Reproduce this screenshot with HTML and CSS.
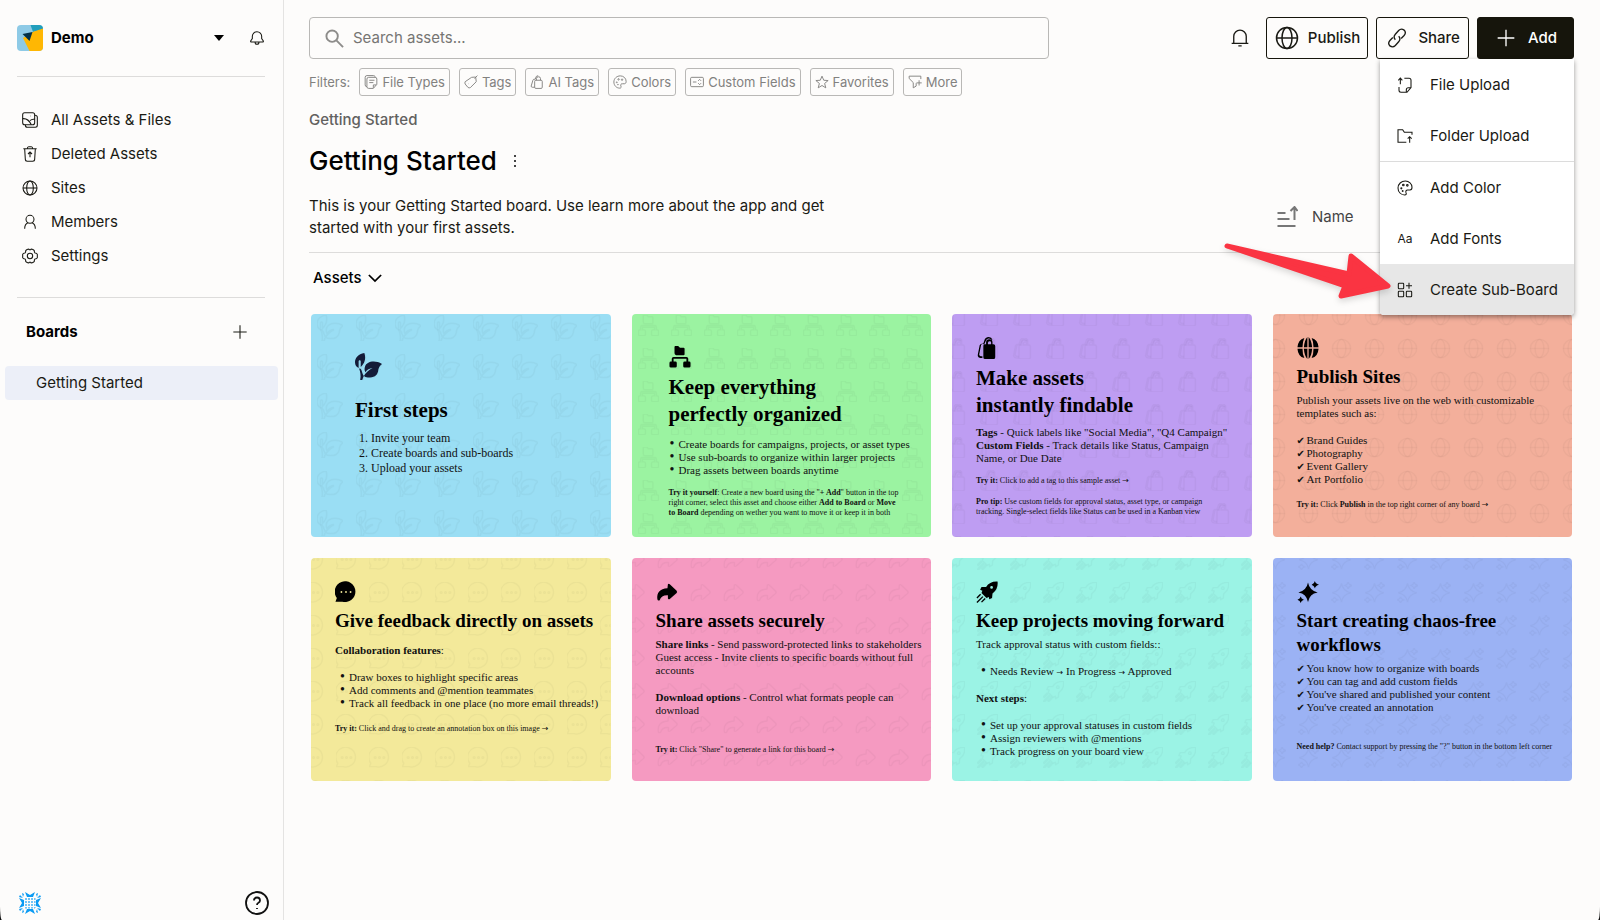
FILE: index.html
```html
<!DOCTYPE html>
<html lang="en">
<head>
    <meta charset="UTF-8">
    <meta name="viewport" content="width=device-width, initial-scale=1.0">
    <title>Getting Started</title>
    <link rel="stylesheet" href="styles.css">
</head>
<body>
    <!-- Shared icon shapes -->
    <svg class="sprite" aria-hidden="true">
        <symbol id="i-bell" viewBox="0 0 24 24"><path d="M2 18.500h20M4.500 18.500V10a7.500 7.500 0 0 1 15 0v8.500M10 21.500h4"/></symbol>
        <symbol id="i-globe" viewBox="0 0 24 24"><circle cx="12" cy="12" r="10.500"/><ellipse cx="12" cy="12" rx="5" ry="10.500"/><path d="M1.500 12h21"/></symbol>
        <symbol id="i-plus" viewBox="0 0 24 24"><path d="M12 2v20M2 12h20"/></symbol>
        <symbol id="i-palette" viewBox="0 0 24 24"><path d="M12.500 1.500C6.500 1.500 1.500 6 1.500 12s4.500 10.500 10 10.500c2.500 0 3-1.500 2-3.500-1-2.500.5-4.500 3-4h3c2 0 3-1.500 3-4 0-5.500-4.500-9.500-10-9.500z"/><circle cx="9.500" cy="7.500" r="1.200"/><circle cx="15.500" cy="8" r="1.200"/><circle cx="6.500" cy="12.500" r=".8"/><circle cx="8.500" cy="16.500" r=".6"/></symbol>
        <symbol id="i-leaf" viewBox="0 0 26 26"><path d="M9 0C3 1 0 5 0 9c0 3 1.500 4.500 3.500 5.500V8c0-1.500 2-1.500 2 0v5.500C9 10 11 6 9 0z"/><path d="M26 10.500c-7-4-15-2.500-16.500 3-.5 2-.3 3.500.5 5 1.500-2.500 4-3.500 7-4-3.500 2-6.500 4-9 8.500L7 26H5c1-4 0-8-1-11 2 0 2.500 2 3 4 1 3 1.500 3 3 4 8 2 12-1 12.500-7 .5-2.500 1.500-4 3.500-5.500z"/></symbol>
        <symbol id="i-tree" viewBox="0 0 24 24"><path d="M6 1q0-1 1-1h3l2 2h4q1 0 1 1v6q0 1-1 1H8q-2 0-2-2z"/><path d="M11 12h8q2 0 2 2v3h1q1.500 0 1.500 1.500V22q0 1.500-1.500 1.500h-5q-1.500 0-1.500-1.500v-3.500q0-1.500 1.500-1.500h2v-3H5v3h2q1.500 0 1.500 1.500V22q0 1.500-1.500 1.500H2Q.5 23.500.5 22v-3.500Q.5 17 2 17h1v-3q0-2 2-2h6z"/></symbol>
        <symbol id="i-bags" viewBox="0 0 24 24"><path d="M9 8h2V6a3.500 3.500 0 0 1 7 0v2h1q2 0 2 2v12q0 2-2 2H10q-2 0-2-2V10q0-2 1-2zM13 8h3.500V6q0-1.500-1.500-1.500T13 6z"/><path d="M8 7l1-3q1-4 5-4 3 0 4 3l-1.500 0q-1-1.500-3-1.500-2 0-3 3L9 8q-3-1-3.500 1L3.500 19q0 2 3.500 2v2q-6 0-5-4L4 9q.5-2 4-2z"/></symbol>
        <symbol id="i-globe-solid" viewBox="0 0 24 24"><path d="M8 1Q1 3 .5 11.300H6Q6 5 8 1zM11.300 0Q8 4 7.500 11.300h3.800zM12.700 0Q16 4 16.500 11.300h-3.800zM16 1q7 2 7.500 10.300H18Q18 5 16 1zM8 23Q1 21 .5 12.700H6Q6 19 8 23zM11.300 24Q8 20 7.500 12.700h3.800zM12.700 24q3.300-4 3.800-11.300h-3.800zM16 23q7-2 7.500-10.300H18Q18 19 16 23z"/></symbol>
        <symbol id="i-chat" viewBox="0 0 24 24"><path fill-rule="evenodd" d="M.5 22.500L2 18.500A11.300 11.300 0 1 1 8 22.500zM6 12a1 1 0 1 0 2 0 1 1 0 1 0-2 0zM11 12a1 1 0 1 0 2 0 1 1 0 1 0-2 0zM16 12a1 1 0 1 0 2 0 1 1 0 1 0-2 0z"/></symbol>
        <symbol id="i-forward" viewBox="0 0 24 24"><path d="M13 3.500q1-1 2 0l7.500 7q1 1.300 0 2.500l-7.500 6.500q-1.500 1-2-.5V15.500q-7-.5-9 5.500Q2 22 1.500 20 0 9 12.500 8z"/></symbol>
        <symbol id="i-rocket" viewBox="0 0 24 24"><path fill-rule="evenodd" d="M23.500.5Q15 0 11 6.500L6 6.500 4.500 9.500l2.500 1-1 2.500 5.500 5.500 2.500-1 .5 2.500 3-1.500.5-5Q24.500 9 23.500.5zM17 5.500a1.500 1.500 0 1 1 0 3 1.500 1.500 0 1 1 0-3z"/><path d="M4.500 14L0.500 18l1 1 4-4zM7 16.500L.5 23l1 1L8 17.500zM9.500 18.500l-4 4 1 1 4-4z"/></symbol>
        <symbol id="i-sparkle" viewBox="0 0 24 24"><path d="M12 1.500q1.500 8.500 10.500 11-9 1.500-10.500 10.500Q10.500 14 1.500 12.500 10.500 10 12 1.500zM19.500 0q.5 3 4.500 4-4 1-4.500 4-.5-3-3.500-4 3-1 3.500-4zM4 17q.5 2.500 3.500 3.500Q4.500 21.500 4 24q-.5-2.500-3.500-3.500Q3.500 19.500 4 17z"/></symbol>

        <pattern id="p-leaf" width="39" height="39" patternUnits="userSpaceOnUse"><use href="#i-leaf" x="6" y="1" width="26" height="26"/></pattern>
        <pattern id="p-tree" width="33" height="33" patternUnits="userSpaceOnUse"><use href="#i-tree" x="6" y="1" width="21" height="21"/></pattern>
        <pattern id="p-bags" width="33" height="33" patternUnits="userSpaceOnUse" x="26" y="-10"><use href="#i-bags" x="1" y="1" width="21" height="21"/></pattern>
        <pattern id="p-globe" width="33" height="33" patternUnits="userSpaceOnUse" x="24" y="-10"><use href="#i-globe" x="1" y="1" width="21" height="21"/></pattern>
        <pattern id="p-chat" width="33" height="33" patternUnits="userSpaceOnUse" x="24" y="-10"><use href="#i-chat" x="1" y="1" width="21" height="21"/></pattern>
        <pattern id="p-forward" width="33" height="33" patternUnits="userSpaceOnUse" x="24" y="-10"><use href="#i-forward" x="1" y="1" width="21" height="21"/></pattern>
        <pattern id="p-rocket" width="33" height="33" patternUnits="userSpaceOnUse" x="24" y="-10"><use href="#i-rocket" x="1" y="1" width="21" height="21"/></pattern>
        <pattern id="p-sparkle" width="33" height="33" patternUnits="userSpaceOnUse" x="24" y="-10"><use href="#i-sparkle" x="1" y="1" width="21" height="21"/></pattern>
    </svg>

    <aside class="sidebar">
        <div class="workspace">
            <button class="workspace-switch">
                <svg class="logo" viewBox="0 0 26 26">
                    <path fill="#8ecae6" d="M0 0h26v26H0z"/>
                    <path fill="#219ebc" d="M13.500 0H26v4.500L16 7z"/>
                    <path fill="#ffb703" d="M15.500 7L26 3.500V26H12.500L6 13z"/>
                    <path fill="#023047" d="M5.500 9l10-2-3 9z"/>
                </svg>
                <strong>Demo</strong>
                <svg class="caret" viewBox="0 0 10 6"><path d="M0 0h10L5 6z"/></svg>
            </button>
            <button class="icon-button" aria-label="Notifications">
                <svg class="icon" viewBox="0 0 24 24"><path d="M4 18q-2 0-1.500-1.500L5 13V9.500a7 7 0 0 1 14 0V13l2.500 3.500Q22 18 20 18zM9 18q0 3.500 3 3.500t3-3.500"/></svg>
            </button>
        </div>

        <nav class="nav">
            <a href="#"><svg class="icon" viewBox="0 0 24 24"><rect x="1" y="1" width="18" height="18" rx="3"/><path d="M19 5q4 0 4 3v12q0 3-3 3H8q-3 0-3-4M1 10q8-1 13 9M12 13q3-3 7-2M13 6h.5"/></svg>All Assets &amp; Files</a>
            <a href="#"><svg class="icon" viewBox="0 0 24 24"><path d="M2 4h20M4 4l1 16q0 3 3 3h8q3 0 3-3l1-16M8 4q0-3 2-3h4q2 0 2 3M12 17V9M9 12l3-3 3 3"/></svg>Deleted Assets</a>
            <a href="#"><svg class="icon"><use href="#i-globe"/></svg>Sites</a>
            <a href="#"><svg class="icon" viewBox="0 0 24 24"><circle cx="12" cy="8" r="6"/><path d="M4 22q0-7 5-9M20 22q0-7-5-9"/></svg>Members</a>
            <a href="#"><svg class="icon" viewBox="0 0 24 24"><path d="M8.500 2q1.500-1 2.500.5h2Q14 1 15.500 2l2 1Q19 4 18.500 6l1 1.500q3 0 3.500 2v5q-.5 2-3.500 2l-1 1.500q.5 2-1 3l-2 1q-1.500 1-2.500-.5h-2Q10 23 8.500 22l-2-1Q5 20 5.500 18l-1-1.500q-3 0-3.500-2v-5q.5-2 3.500-2l1-1.500Q5 4 6.500 3z"/><circle cx="12" cy="12" r="4"/></svg>Settings</a>
        </nav>

        <div class="boards-head">
            <h2>Boards</h2>
            <button class="icon-button" aria-label="Add board"><svg class="icon"><use href="#i-plus"/></svg></button>
        </div>
        <a class="board-link" href="#">Getting Started</a>

        <div class="sidebar-foot">
            <svg class="mark" viewBox="0 0 24 24">
                <path d="M7 1l5 3 5-3-2 5H9zM7 23l5-3 5 3-2-5H9zM1 7l3 5-3 5 5-2V9zM23 7l-3 5 3 5-5-2V9zM2 4l3 3-4-1zM4 2l1 4 1-3zM22 4l-3 3 4-1zM20 2l-1 4-1-3zM2 20l3-3-4 1zM4 22l1-4 1 3zM22 20l-3-3 4 1zM20 22l-1-4-1 3z"/>
                <path class="mark-grid" d="M7 8h10M7 11h10M7 14h10M7 17h10M8 7v10M11 7v10M14 7v10M17 7v10"/>
            </svg>
            <button class="icon-button" aria-label="Help">
                <svg class="help" viewBox="0 0 24 24"><circle cx="12" cy="12" r="11"/><path d="M9 9.500q0-3 3-3t3 3q0 1.500-1.500 2.300T12 14M12 17v1"/></svg>
            </button>
        </div>
    </aside>

    <main class="main">
        <header class="topbar">
            <label class="search">
                <svg viewBox="0 0 20 20"><circle cx="7.500" cy="7.500" r="6"/><path d="M12 12l7 7"/></svg>
                <input type="search" placeholder="Search assets..." aria-label="Search assets">
            </label>
            <div class="actions">
                <button class="icon-button" aria-label="Alerts"><svg class="icon bell"><use href="#i-bell"/></svg></button>
                <button class="btn"><svg class="icon icon-lg"><use href="#i-globe"/></svg>Publish</button>
                <button class="btn btn-share"><svg class="icon icon-md" viewBox="0 0 24 24"><path d="M10 14q-3-3 0-6.500l4-4.500q3-3 6.500-.5 3 3 0 6.500L17 12.500M14 10q3 3 0 6.500L10 21q-3 3-6.500.5-3-3 0-6.500L7 11.500"/></svg>Share</button>
                <div class="add">
                    <button class="btn btn-add"><svg class="icon icon-md"><use href="#i-plus"/></svg>Add</button>
                    <div class="menu">
                        <button><svg class="icon" viewBox="0 0 24 24"><path d="M5 11V2M2 5l3-3.500L8 5M11 2h7q3 0 3 3v11l-6 7H6q-3 0-3-3v-5M14 23v-4q0-3 3-3h4"/></svg>File Upload</button>
                        <button><svg class="icon" viewBox="0 0 24 24"><path d="M14 21.500H1.500v-19h7l2.500 4h11.500V10M19 22v-9M16 16l3-3 3 3"/></svg>Folder Upload</button>
                        <hr>
                        <button><svg class="icon"><use href="#i-palette"/></svg>Add Color</button>
                        <button><span class="aa">Aa</span>Add Fonts</button>
                        <button class="active"><svg class="icon" viewBox="0 0 24 24"><rect x="2" y="2" width="8" height="8" rx="1"/><rect x="2" y="14" width="8" height="8" rx="1"/><rect x="14" y="14" width="8" height="8" rx="1"/><path d="M18 1v9M13.500 5.500h9"/></svg>Create Sub-Board</button>
                        <svg class="pointer" viewBox="0 0 170 64"><path d="M4 7L126 35 128 17 165 47 118 57 122 47z"/></svg>
                    </div>
                </div>
            </div>
        </header>

        <div class="filters">
            <span>Filters:</span>
            <button><svg class="icon" viewBox="0 0 24 24"><path d="M5 20q-3 0-3-3V4q0-3 3-3h11q3 0 3 2"/><path d="M8 4h11q3 0 3 3v9l-6 7H8q-3 0-3-3V7q0-3 3-3zM9 9h9M9 13h7M16 22v-5h5"/></svg>File Types</button>
            <button><svg class="icon" viewBox="0 0 24 24"><path d="M13 4l7-.5 1 8-10 10q-2 1-4 0l-5-6q-1-2 0-4zM18 6l5-5M7 15h.5"/></svg>Tags</button>
            <button><svg class="icon" viewBox="0 0 24 24"><rect x="8" y="9" width="13" height="14" rx="2"/><path d="M11 9V6q0-3 3.500-3T18 6v3M8 21H4q-2 0-2-2L5 9q0-2 4-2 1-6 5-6"/></svg>AI Tags</button>
            <button><svg class="icon"><use href="#i-palette"/></svg>Colors</button>
            <button><svg class="icon" viewBox="0 0 24 24"><rect x="1" y="4" width="22" height="16" rx="2"/><path d="M5 12h6M14 10l2.500-2.500L19 10M14 14l2.500 2.500L19 14"/></svg>Custom Fields</button>
            <button><svg class="icon" viewBox="0 0 24 24"><path d="M12 2l3 7 7.500.5-6 5 2 7.500-6.500-4-6.500 4 2-7.500-6-5L9 9z"/></svg>Favorites</button>
            <button><svg class="icon" viewBox="0 0 24 24"><path d="M22 7V2H2v4l7 7v9l5-3v-5M19 9v9M14.500 13.500h9"/></svg>More</button>
        </div>

        <a class="breadcrumb" href="#">Getting Started</a>

        <div class="title">
            <h1>Getting Started</h1>
            <button class="icon-button" aria-label="Board options"><svg class="dots" viewBox="0 0 4 14"><path d="M1 1h2v2H1zM1 6h2v2H1zM1 11h2v2H1z"/></svg></button>
        </div>

        <div class="intro">
            <p>This is your Getting Started board. Use learn more about the app and get started with your first assets.</p>
            <label class="sort">
                <svg viewBox="0 0 20 21"><path d="M0 7h8M0 13h12M0 20h18M17 14V2M13 5l4-4 3 4"/></svg>
                <select aria-label="Sort by"><option>Name</option></select>
            </label>
        </div>

        <button class="section-toggle">Assets <svg viewBox="0 0 16 10"><path d="M1 1l7 7 7-7"/></svg></button>

        <section class="cards">
            <article class="card card-first">
                <svg class="pattern"><rect width="100%" height="100%" fill="url(#p-leaf)"/></svg>
                <svg class="card-icon"><use href="#i-leaf"/></svg>
                <h3 class="large">First steps</h3>
                <ol>
                    <li>Invite your team</li>
                    <li>Create boards and sub-boards</li>
                    <li>Upload your assets</li>
                </ol>
            </article>
            <article class="card card-organize">
                <svg class="pattern"><rect width="100%" height="100%" fill="url(#p-tree)"/></svg>
                <svg class="card-icon"><use href="#i-tree"/></svg>
                <h3 class="large">Keep everything<br>perfectly organized</h3>
                <ul>
                    <li>Create boards for campaigns, projects, or asset types</li>
                    <li>Use sub-boards to organize within larger projects</li>
                    <li>Drag assets between boards anytime</li>
                </ul>
                <p class="small"><b>Try it yourself</b>: Create a new board using the "<b>+ Add</b>" button in the top<br>right corner, select this asset and choose either <b>Add to Board</b> or <b>Move<br>to Board</b> depending on wether you want to move it or keep it in both</p>
            </article>
            <article class="card card-find">
                <svg class="pattern"><rect width="100%" height="100%" fill="url(#p-bags)"/></svg>
                <svg class="card-icon"><use href="#i-bags"/></svg>
                <h3 class="large">Make assets<br>instantly findable</h3>
                <p><b>Tags</b> - Quick labels like "Social Media", "Q4 Campaign"<br><b>Custom Fields</b> - Track details like Status, Campaign<br>Name, or Due Date</p>
                <p class="small"><b>Try it:</b> Click to add a tag to this sample asset <span class="arrow">→</span></p>
                <p class="small"><b>Pro tip:</b> Use custom fields for approval status, asset type, or campaign<br>tracking. Single-select fields like Status can be used in a Kanban view</p>
            </article>
            <article class="card card-publish">
                <svg class="pattern"><rect width="100%" height="100%" fill="url(#p-globe)"/></svg>
                <svg class="card-icon"><use href="#i-globe-solid"/></svg>
                <h3>Publish Sites</h3>
                <p>Publish your assets live on the web with customizable<br>templates such as:</p>
                <ul class="checks spaced">
                    <li>Brand Guides</li>
                    <li>Photography</li>
                    <li>Event Gallery</li>
                    <li>Art Portfolio</li>
                </ul>
                <p class="small"><b>Try it:</b> Click <b>Publish</b> in the top right corner of any board <span class="arrow">→</span></p>
            </article>
            <article class="card card-feedback">
                <svg class="pattern"><rect width="100%" height="100%" fill="url(#p-chat)"/></svg>
                <svg class="card-icon"><use href="#i-chat"/></svg>
                <h3>Give feedback directly on assets</h3>
                <p class="lead"><b>Collaboration features</b>:</p>
                <ul class="indent spaced">
                    <li>Draw boxes to highlight specific areas</li>
                    <li>Add comments and @mention teammates</li>
                    <li>Track all feedback in one place (no more email threads!)</li>
                </ul>
                <p class="small"><b>Try it:</b> Click and drag to create an annotation box on this image <span class="arrow">→</span></p>
            </article>
            <article class="card card-share">
                <svg class="pattern"><rect width="100%" height="100%" fill="url(#p-forward)"/></svg>
                <svg class="card-icon"><use href="#i-forward"/></svg>
                <h3>Share assets securely</h3>
                <p><b>Share links</b> - Send password-protected links to stakeholders<br>Guest access - Invite clients to specific boards without full<br>accounts</p>
                <p class="spaced"><b>Download options</b> - Control what formats people can<br>download</p>
                <p class="small last"><b>Try it:</b> Click "Share" to generate a link for this board <span class="arrow">→</span></p>
            </article>
            <article class="card card-projects">
                <svg class="pattern"><rect width="100%" height="100%" fill="url(#p-rocket)"/></svg>
                <svg class="card-icon"><use href="#i-rocket"/></svg>
                <h3>Keep projects moving forward</h3>
                <p>Track approval status with custom fields::</p>
                <ul class="indent spaced">
                    <li>Needs Review <span class="arrow">→</span> In Progress <span class="arrow">→</span> Approved</li>
                </ul>
                <p class="spaced"><b>Next steps</b>:</p>
                <ul class="indent spaced">
                    <li>Set up your approval statuses in custom fields</li>
                    <li>Assign reviewers with @mentions</li>
                    <li>Track progress on your board view</li>
                </ul>
            </article>
            <article class="card card-chaos">
                <svg class="pattern"><rect width="100%" height="100%" fill="url(#p-sparkle)"/></svg>
                <svg class="card-icon"><use href="#i-sparkle"/></svg>
                <h3>Start creating chaos-free<br>workflows</h3>
                <ul class="checks">
                    <li>You know how to organize with boards</li>
                    <li>You can tag and add custom fields</li>
                    <li>You've shared and published your content</li>
                    <li>You've created an annotation</li>
                </ul>
                <p class="small last"><b>Need help?</b> Contact support by pressing the "?" button in the bottom left corner</p>
            </article>
        </section>
    </main>
</body>
</html>
```
FILE: styles.css
```css
* {
    margin: 0;
    padding: 0;
    box-sizing: border-box;
}

html {
    background: #111;
}

body {
    display: flex;
    min-height: 100vh;
    font-family: Inter, "Liberation Sans", sans-serif;
    font-size: 15px;
    line-height: 22px;
    color: #1a1a14;
    background: #fdfcfb;
    border-radius: 0 0 2px 2px / 0 0 14px 14px;
}

button,
input,
select {
    font: inherit;
    color: inherit;
    background: none;
    border: none;
}

button {
    cursor: pointer;
}

a {
    color: inherit;
    text-decoration: none;
}

.sprite {
    position: absolute;
    width: 0;
    height: 0;
}

.icon {
    width: 16px;
    height: 16px;
    flex: none;
    fill: none;
    stroke: currentColor;
    stroke-width: 1.6;
}

.icon-button {
    display: flex;
    align-items: center;
}

/* Sidebar */

.sidebar {
    width: 284px;
    flex: none;
    display: flex;
    flex-direction: column;
    border-right: 1px solid #e4e3e2;
}

.workspace {
    display: flex;
    align-items: center;
    gap: 25px;
    margin: 0 18px 0 17px;
    height: 77px;
    border-bottom: 1px solid #dddcdb;
}

.workspace-switch {
    flex: 1;
    display: flex;
    align-items: center;
    gap: 8px;
    color: #000;
}

.logo {
    width: 26px;
    height: 26px;
    border-radius: 4px;
}

.caret {
    width: 10px;
    height: 6px;
    margin-left: auto;
}

.nav {
    margin: 0 18px 0 17px;
    padding: 26px 5px 24px;
    border-bottom: 1px solid #dddcdb;
}

.nav a {
    display: flex;
    align-items: center;
    gap: 13px;
    height: 34px;
}

.boards-head {
    display: flex;
    justify-content: space-between;
    align-items: center;
    height: 68px;
    padding: 0 35px 0 26px;
}

.boards-head h2 {
    font-size: 15px;
    color: #000;
}

.board-link {
    margin: 0 5px;
    padding: 6px 31px;
    border-radius: 4px;
    background: #eceff8;
}

.sidebar-foot {
    display: flex;
    justify-content: space-between;
    align-items: center;
    margin-top: auto;
    padding: 0 14px 5px 18px;
}

.mark {
    width: 24px;
    height: 24px;
    fill: #0c9bf3;
}

.mark-grid {
    stroke: #0c9bf3;
    stroke-width: 0.7;
    stroke-dasharray: 2 1;
}

.help {
    width: 24px;
    height: 24px;
    fill: none;
    stroke: #111;
    stroke-width: 1.8;
}

/* Top bar */

.main {
    flex: 1;
    min-width: 0;
    padding: 17px 26px 17px 25px;
}

.topbar {
    display: flex;
    justify-content: space-between;
}

.search {
    display: flex;
    align-items: center;
    gap: 9px;
    width: 58.5%;
    height: 42px;
    padding: 0 15px;
    border: 1px solid #b9b8b6;
    border-radius: 4px;
}

.search svg {
    width: 19px;
    height: 19px;
    fill: none;
    stroke: #8d8c8a;
    stroke-width: 2;
}

.search input {
    flex: 1;
    outline: none;
}

.search input::placeholder {
    color: #767573;
}

.actions {
    display: flex;
    align-items: center;
    gap: 8px;
}

.bell {
    width: 20px;
    height: 20px;
    margin-right: 8px;
}

.btn {
    display: flex;
    align-items: center;
    justify-content: center;
    gap: 9px;
    height: 42px;
    padding: 0 7px 0 8px;
    border: 1px solid #16150c;
    border-radius: 3px;
    font-weight: 500;
}

.icon-lg {
    width: 24px;
    height: 24px;
    stroke-width: 1.5;
}

.icon-md {
    width: 20px;
    height: 20px;
}

.btn-share {
    gap: 11px;
    padding: 0 8px 0 10px;
}

.btn-add {
    gap: 12px;
    padding: 0 16px 0 18px;
    color: #fff;
    background: #16150c;
}

.add {
    position: relative;
}

.menu {
    position: absolute;
    z-index: 1;
    top: 100%;
    right: 0;
    width: 194px;
    background: #fff;
    border-radius: 0 0 4px 4px;
    box-shadow: 0 2px 5px rgba(0, 0, 0, 0.4);
}

.menu button {
    display: flex;
    align-items: center;
    gap: 17px;
    width: 100%;
    height: 51px;
    padding: 0 17px;
    white-space: nowrap;
}

.menu hr {
    border: none;
    border-top: 1px solid #dcdcdc;
}

.menu .active {
    background: #e7e7e7;
    border-radius: 0 0 4px 4px;
}

.aa {
    width: 16px;
    font-size: 12px;
}

/* Red arrow that lies over the board and points at the last menu item */
.pointer {
    position: absolute;
    right: 181px;
    bottom: 12px;
    width: 170px;
    height: 64px;
    fill: #fa3442;
    stroke: #fa3442;
    stroke-width: 5;
    stroke-linejoin: round;
    filter: drop-shadow(0 3px 3px rgba(0, 0, 0, 0.15));
}

/* Filters and heading */

.filters {
    display: flex;
    gap: 9px;
    margin-top: 9px;
    font-size: 13px;
    line-height: 28px;
    color: #82817f;
}

.filters button {
    display: flex;
    align-items: center;
    gap: 4px;
    height: 28px;
    padding: 0 4px;
    border: 1px solid #b9b8b6;
    border-radius: 3px;
}

.filters .icon {
    width: 14px;
    height: 14px;
}

.breadcrumb {
    display: block;
    margin-top: 13px;
    font-weight: 500;
    color: #62615f;
}

.title {
    display: flex;
    align-items: center;
    gap: 16px;
    margin-top: 14px;
}

h1 {
    font-size: 26px;
    font-weight: 500;
    line-height: 32px;
    color: #000;
}

.dots {
    width: 4px;
    height: 14px;
    fill: #444;
}

.intro {
    display: flex;
    justify-content: space-between;
    align-items: center;
    padding: 18px 0 13px;
    border-bottom: 1px solid #dddcdb;
}

.intro p {
    max-width: 530px;
}

.sort {
    display: flex;
    gap: 14px;
    width: 297px;
}

.sort svg {
    width: 21px;
    height: 21px;
    fill: none;
    stroke: #777;
    stroke-width: 2;
}

.sort select {
    appearance: none;
    color: #444;
}

.section-toggle {
    display: flex;
    align-items: center;
    gap: 6px;
    margin: 14px 4px 25px;
    font-weight: 500;
    color: #000;
}

.section-toggle svg {
    width: 14px;
    height: 9px;
    fill: none;
    stroke: #000;
    stroke-width: 2;
}

/* Cards */

.cards {
    display: grid;
    grid-template-columns: repeat(4, 1fr);
    gap: 21px;
    padding: 0 2px;
}

.card {
    position: relative;
    overflow: hidden;
    min-height: 223px;
    padding: 23px 0 0 24px;
    border-radius: 4px;
    font-family: "Liberation Serif", serif;
    font-size: 11px;
    line-height: 13px;
    color: #111;
    white-space: nowrap;
}

.card > * {
    position: relative;
}

.card .pattern {
    position: absolute;
    top: 0;
    left: 0;
    width: 100%;
    height: 100%;
}

.sprite pattern {
    fill: none;
    stroke: #000;
    stroke-opacity: 0.03;
    stroke-width: 1.5;
}

.card-icon {
    display: block;
    width: 22px;
    height: 22px;
    fill: #000;
}

h3 {
    margin: 6px 0 5px;
    font-size: 19px;
    line-height: 24px;
    color: #000;
}

h3.large {
    margin: 6px 0 7px;
    font-size: 21px;
    line-height: 27px;
}

.card ul,
.card ol {
    padding-left: 10px;
}

.card .indent {
    padding-left: 14px;
}

.card .checks {
    padding-left: 0;
    list-style: none;
}

.card ul:not(.checks) {
    list-style: none;
}

.card ul:not(.checks) li::before {
    content: "•";
    display: inline-block;
    width: 9px;
    margin-left: -9px;
    font-size: 14px;
    line-height: 1px;
}

.checks li::before {
    content: "✔";
    display: inline-block;
    width: 10px;
    font-family: "DejaVu Sans", sans-serif;
    font-size: 10px;
    line-height: 1px;
}

.arrow {
    font-family: "Noto Sans", "DejaVu Sans", sans-serif;
    font-size: 8px;
    line-height: 1px;
}

.small {
    margin-top: 11px;
    font-size: 8px;
    line-height: 10px;
}

.card .lead {
    margin-top: 11px;
}

.card .spaced {
    margin-top: 14px;
}

.spaced + .small {
    margin-top: 14px;
}

.card .last {
    margin-top: 28px;
}

.card-first {
    padding: 39px 0 0 44px;
    font-size: 12px;
    line-height: 15px;
    background: #9adef4;
}

.card-first .card-icon {
    width: 27px;
    height: 27px;
    fill: #141b38;
}

.card-first h3.large {
    margin: 17px 0 7px;
}

.card-first ol {
    padding-left: 16px;
}

.card-organize {
    padding: 32px 0 0 37px;
    background: #9bf3a1;
}

.card-organize h3.large {
    margin-bottom: 10px;
}

.card-find {
    background: #be9df2;
}

.card-publish {
    background: #f3af9b;
}

.card-feedback {
    background: #f3e99a;
}

.card-share {
    background: #f59ac1;
}

.card-projects {
    background: #9bf3e5;
}

.card-chaos {
    background: #9bb2f4;
}
```
